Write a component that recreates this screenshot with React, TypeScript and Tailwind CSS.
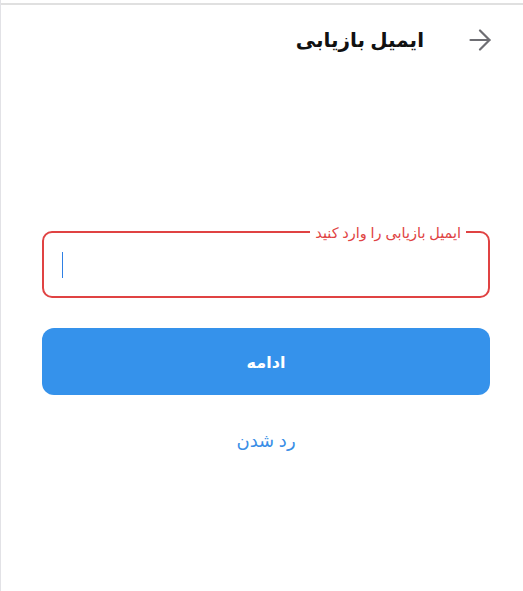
export default function App() {
  return (
    <div
      dir="rtl"
      className="min-h-[591px] bg-white border-l border-[#e2e2e6] pt-[3px]"
      style={{ fontFamily: '"Noto Sans", "DejaVu Sans", sans-serif' }}
    >
      <div className="border-t-2 border-[#e0e0e0]">
        {/* header */}
        <div className="flex items-center h-[70px] pr-[32px] gap-[45px]">
          <svg width="22" height="22" viewBox="0 0 22 22" fill="none" stroke="#6e6e73" strokeWidth="2.2" strokeLinecap="round" strokeLinejoin="round">
            <path d="M1.5 11h19" />
            <path d="M11 1.5 20.5 11 11 20.5" />
          </svg>
          <h1 className="text-[20px] font-bold text-[#111] leading-none">ایمیل بازیابی</h1>
        </div>

        <div className="pl-[41px] pr-[33px] pt-[156px]">
          {/* email field */}
          <div className="relative h-[67px] rounded-[10px] border-2 border-[#e04343] flex items-center pl-[18px]" dir="ltr">
            <span className="w-px h-[26px] bg-[#2f80e4]" />
            <span className="absolute -top-[11px] right-[22px] bg-white px-[5px] text-[14.5px] leading-[20px] text-[#e04343]" dir="rtl">
              ایمیل بازیابی را وارد کنید
            </span>
          </div>

          <button className="mt-[30px] w-full h-[67px] rounded-[12px] bg-[#3592eb] text-white text-[16px] font-bold">
            ادامه
          </button>

          <div className="mt-[30px] h-[30px] flex items-center justify-center text-[18px] text-[#3a8ee6]">
            رد شدن
          </div>
        </div>
      </div>
    </div>
  );
}
